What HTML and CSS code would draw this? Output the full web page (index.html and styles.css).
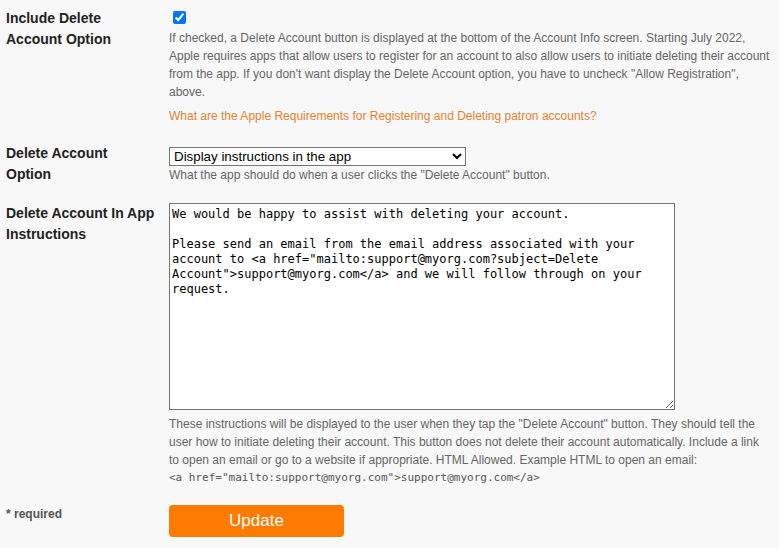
FILE: index.html
```html
<!DOCTYPE html>
<html lang="en">
<head>
    <meta charset="UTF-8">
    <meta name="viewport" content="width=device-width, initial-scale=1.0">
    <title>Account Settings</title>
    <link rel="stylesheet" href="styles.css">
</head>
<body>
    <form class="settings">
        <div class="row">
            <label class="label" for="include_delete">Include Delete Account Option</label>
            <div class="field">
                <input type="checkbox" id="include_delete" checked>
                <p class="help">If checked, a Delete Account button is displayed at the bottom of the Account Info screen. Starting July 2022, Apple requires apps that allow users to register for an account to also allow users to initiate deleting their account from the app. If you don't want display the Delete Account option, you have to uncheck "Allow Registration", above.</p>
                <a class="help-link" href="#">What are the Apple Requirements for Registering and Deleting patron accounts?</a>
            </div>
        </div>
        <div class="row">
            <label class="label" for="delete_option">Delete Account Option</label>
            <div class="field">
                <select id="delete_option" class="select">
                    <option>Display instructions in the app</option>
                    <option>Send an email</option>
                    <option>Open a website</option>
                </select>
                <p class="help">What the app should do when a user clicks the "Delete Account" button.</p>
            </div>
        </div>
        <div class="row">
            <label class="label" for="instructions">Delete Account In App Instructions</label>
            <div class="field">
                <textarea id="instructions" class="instructions">We would be happy to assist with deleting your account.

Please send an email from the email address associated with your account to &lt;a href="mailto:support@myorg.com?subject=Delete Account"&gt;support@myorg.com&lt;/a&gt; and we will follow through on your request.</textarea>
                <p class="help help-top">These instructions will be displayed to the user when they tap the "Delete Account" button. They should tell the user how to initiate deleting their account. This button does not delete their account automatically. Include a link to open an email or go to a website if appropriate. HTML Allowed. Example HTML to open an email:</p>
                <code class="example">&lt;a href="mailto:support@myorg.com"&gt;support@myorg.com&lt;/a&gt;</code>
            </div>
        </div>
        <div class="row">
            <div class="required">* required</div>
            <div class="field">
                <input type="submit" class="update" value="Update">
            </div>
        </div>
    </form>
</body>
</html>
```

FILE: styles.css
```css
body {
    font-family: "Liberation Sans", Arial, sans-serif;
    background-color: #f8f8f8;
    color: #222;
    margin: 0;
    padding: 8px 9px 0 6px;
}

.row {
    display: grid;
    grid-template-columns: 163px 1fr;
    margin-bottom: 18px;
}

.label {
    font-size: 14px;
    font-weight: bold;
    line-height: 21px;
    padding-right: 14px;
}

.field {
    min-width: 0;
}

input[type="checkbox"] {
    display: block;
    width: 13px;
    height: 13px;
    margin: 3px 3px 5px 4px;
}

.help {
    font-size: 12px;
    line-height: 18px;
    color: #666;
    margin: 0;
}

.help-top {
    margin-top: 5px;
    max-width: 598px;
}

.example {
    display: block;
    font-family: "DejaVu Sans Mono", monospace;
    font-size: 11px;
    line-height: 18px;
    color: #555;
}

.help-link {
    display: block;
    font-size: 12px;
    line-height: 18px;
    margin-top: 6px;
    color: #e8822e;
    text-decoration: none;
}

.select {
    display: block;
    width: 297px;
    height: 19px;
    margin-top: 4px;
    padding: 0;
    font-family: "Liberation Sans", Arial, sans-serif;
    font-size: 13.33px;
    color: #000;
    background-color: #fff;
    border: 1px solid #767676;
}

.instructions {
    display: block;
    box-sizing: border-box;
    width: 506px;
    height: 207px;
    margin: 0;
    padding: 3px 2px 2px 2px;
    font-family: "DejaVu Sans Mono", monospace;
    font-size: 12px;
    line-height: 15px;
    color: #000;
    background-color: #fff;
    border: 1px solid #767676;
}

.required {
    font-size: 12px;
    font-weight: bold;
    line-height: 18px;
    color: #555;
}

.update {
    display: block;
    width: 175px;
    height: 32px;
    background-color: #ff7b00;
    color: #fff;
    font-family: "Liberation Sans", Arial, sans-serif;
    font-size: 17px;
    border: none;
    border-radius: 4px;
    cursor: pointer;
}
```
